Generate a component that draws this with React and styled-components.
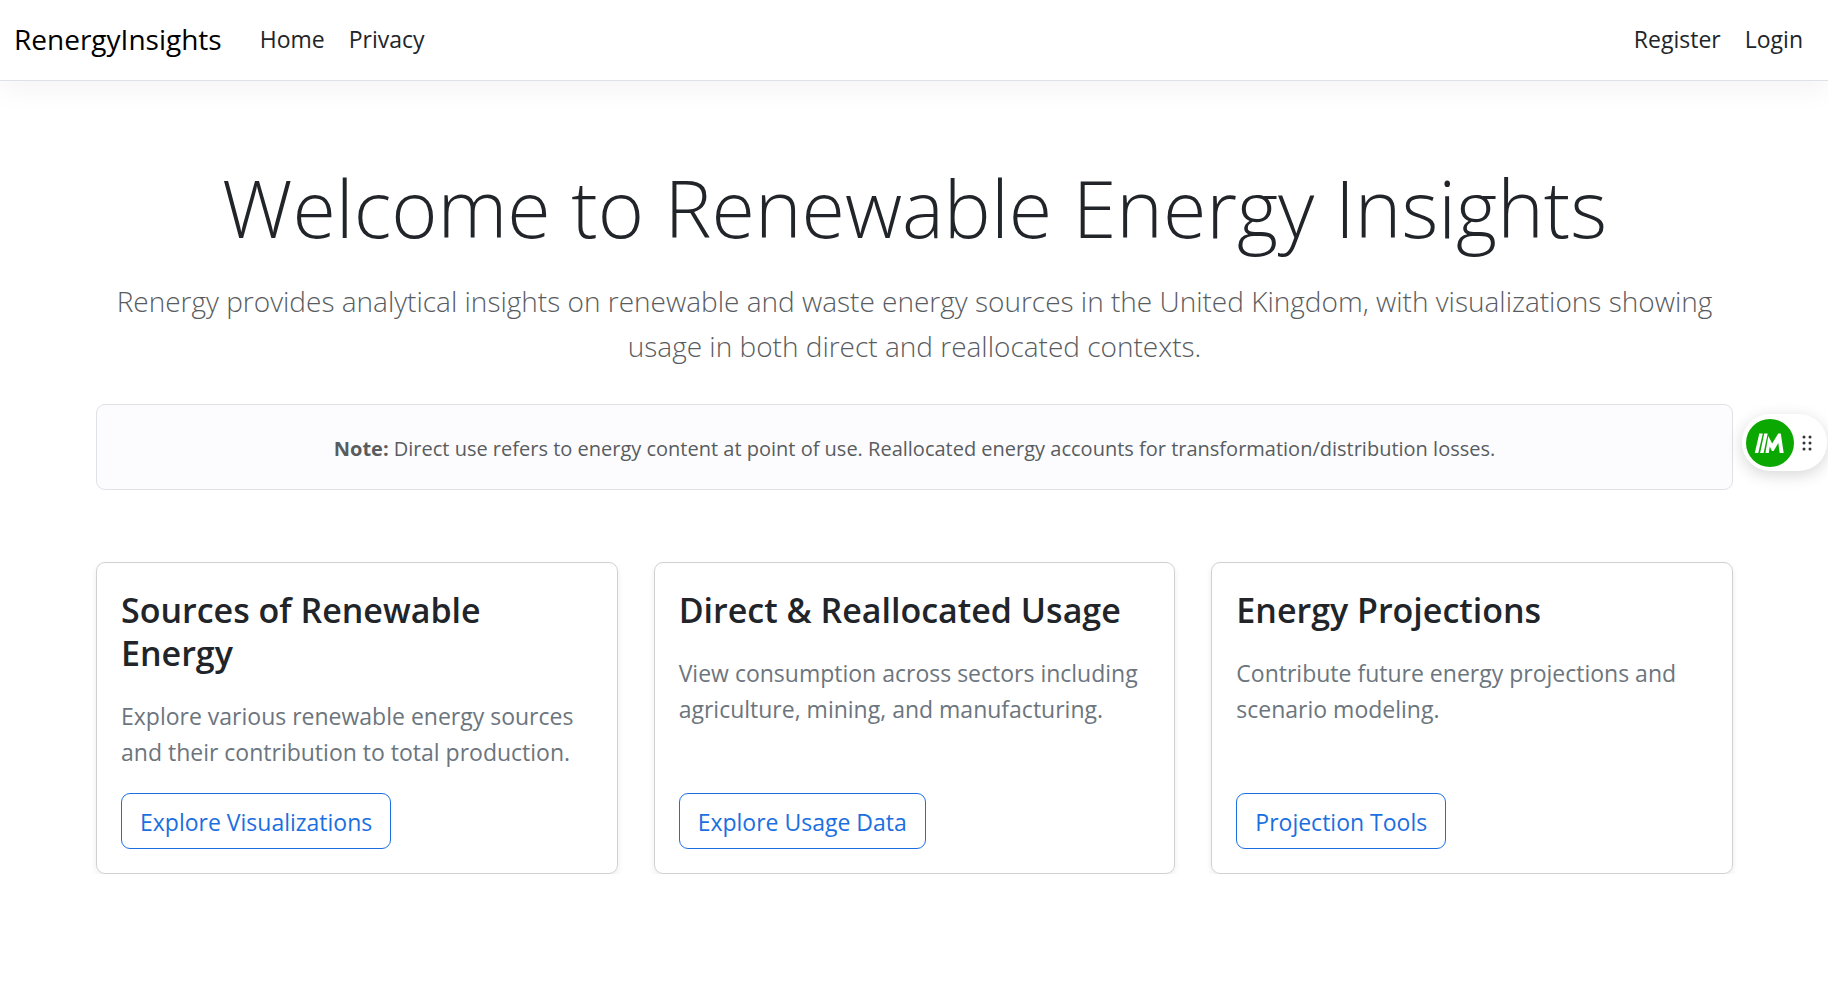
import React from "react";
import styled, { createGlobalStyle } from "styled-components";

const GlobalStyle = createGlobalStyle`
  *, *::before, *::after { box-sizing: border-box; }
  body {
    margin: 0;
    background: #fff;
    color: #212529;
    font-family: "Segoe UI", "Open Sans", "Noto Sans", sans-serif;
    font-size: 23px;
    line-height: 36px;
  }
  h1, h2, p { margin: 0; }
`;

const Navbar = styled.header`
  display: flex;
  align-items: center;
  height: 81px;
  padding: 0 13px 2px 14px;
  border-bottom: 1px solid #dee2e6;
  box-shadow: 0 12px 24px rgba(0, 0, 0, 0.04);
`;

const Brand = styled.a`
  margin-right: 26px;
  color: #000;
  font-size: 28px;
  text-decoration: none;
`;

const NavLinks = styled.nav`
  display: flex;
  margin-left: ${(p) => (p.$end ? "auto" : 0)};
`;

const NavLink = styled.a`
  padding: 0 12px;
  color: #212529;
  text-decoration: none;
`;

const Main = styled.main`
  padding: 73px 95px 0 96px;
`;

const Hero = styled.section`
  text-align: center;
`;

const Title = styled.h1`
  margin-bottom: 17px;
  font-size: 79px;
  font-weight: 300;
  line-height: 108px;
`;

const Lead = styled.p`
  margin-bottom: 35px;
  color: #595c5f;
  font-size: 28px;
  font-weight: 300;
  line-height: 45px;
`;

const Note = styled.p`
  padding: 26px 24px 22px;
  border: 1px solid #dee2e6;
  border-radius: 9px;
  background: #fcfcfe;
  color: #595c5f;
  font-size: 20px;
  text-align: center;
`;

const Cards = styled.section`
  display: grid;
  grid-template-columns: repeat(3, 1fr);
  gap: 36px;
  margin-top: 72px;
`;

const Card = styled.article`
  display: flex;
  flex-direction: column;
  align-items: flex-start;
  gap: 23px;
  padding: 26px 24px 24px;
  border: 1px solid #d0d1d3;
  border-radius: 9px;
  box-shadow: 0 3px 6px rgba(0, 0, 0, 0.075);
`;

const CardTitle = styled.h2`
  font-size: 34px;
  font-weight: 600;
  line-height: 43px;
`;

const CardText = styled.p`
  color: #6c757d;
`;

const CardButton = styled.button`
  margin-top: auto;
  padding: 10px 18px 8px;
  border: 1px solid #1b6fe0;
  border-radius: 9px;
  background: transparent;
  color: #1b6fe0;
  font: inherit;
`;

const Widget = styled.aside`
  position: fixed;
  top: 414px;
  right: 1px;
  display: flex;
  align-items: center;
  gap: 8px;
  width: 85px;
  height: 57px;
  padding-left: 4px;
  border-radius: 28px;
  background: #fff;
  box-shadow: 0 4px 16px rgba(0, 0, 0, 0.16);
`;

const cards = [
  {
    title: "Sources of Renewable Energy",
    text: "Explore various renewable energy sources and their contribution to total production.",
    action: "Explore Visualizations",
  },
  {
    title: "Direct & Reallocated Usage",
    text: "View consumption across sectors including agriculture, mining, and manufacturing.",
    action: "Explore Usage Data",
  },
  {
    title: "Energy Projections",
    text: "Contribute future energy projections and scenario modeling.",
    action: "Projection Tools",
  },
];

function Logo() {
  return (
    <svg width="48" height="48" viewBox="0 0 48 48" aria-hidden="true">
      <circle cx="24" cy="24" r="24" fill="#0aa800" />
      <path d="M13.300 14.500h3.500L12.300 34H8.800zM18.200 14.500h3.500L17.600 34h-3.500z" fill="#fff" />
      <path d="M22.300 17l3.900 7.500 6-10h2.600L37.700 34h-4l-1.400-10-4.700 8h-1.600l-2.300-4.500L22.800 34h-3.400z" fill="#fff" />
    </svg>
  );
}

function Grip() {
  return (
    <svg width="10" height="16" viewBox="0 0 10 16" fill="#333" aria-hidden="true">
      {[2, 8, 14].map((y) => (
        <React.Fragment key={y}>
          <circle cx="2" cy={y} r="1.500" />
          <circle cx="8" cy={y} r="1.500" />
        </React.Fragment>
      ))}
    </svg>
  );
}

export default function App() {
  return (
    <>
      <GlobalStyle />
      <Navbar>
        <Brand href="#">RenergyInsights</Brand>
        <NavLinks>
          <NavLink href="#">Home</NavLink>
          <NavLink href="#">Privacy</NavLink>
        </NavLinks>
        <NavLinks $end>
          <NavLink href="#">Register</NavLink>
          <NavLink href="#">Login</NavLink>
        </NavLinks>
      </Navbar>
      <Main>
        <Hero>
          <Title>Welcome to Renewable Energy Insights</Title>
          <Lead>
            Renergy provides analytical insights on renewable and waste energy sources in the United
            Kingdom, with visualizations showing usage in both direct and reallocated contexts.
          </Lead>
          <Note>
            <strong>Note:</strong> Direct use refers to energy content at point of use. Reallocated
            energy accounts for transformation/distribution losses.
          </Note>
        </Hero>
        <Cards>
          {cards.map((card) => (
            <Card key={card.title}>
              <CardTitle>{card.title}</CardTitle>
              <CardText>{card.text}</CardText>
              <CardButton type="button">{card.action}</CardButton>
            </Card>
          ))}
        </Cards>
      </Main>
      <Widget>
        <Logo />
        <Grip />
      </Widget>
    </>
  );
}
